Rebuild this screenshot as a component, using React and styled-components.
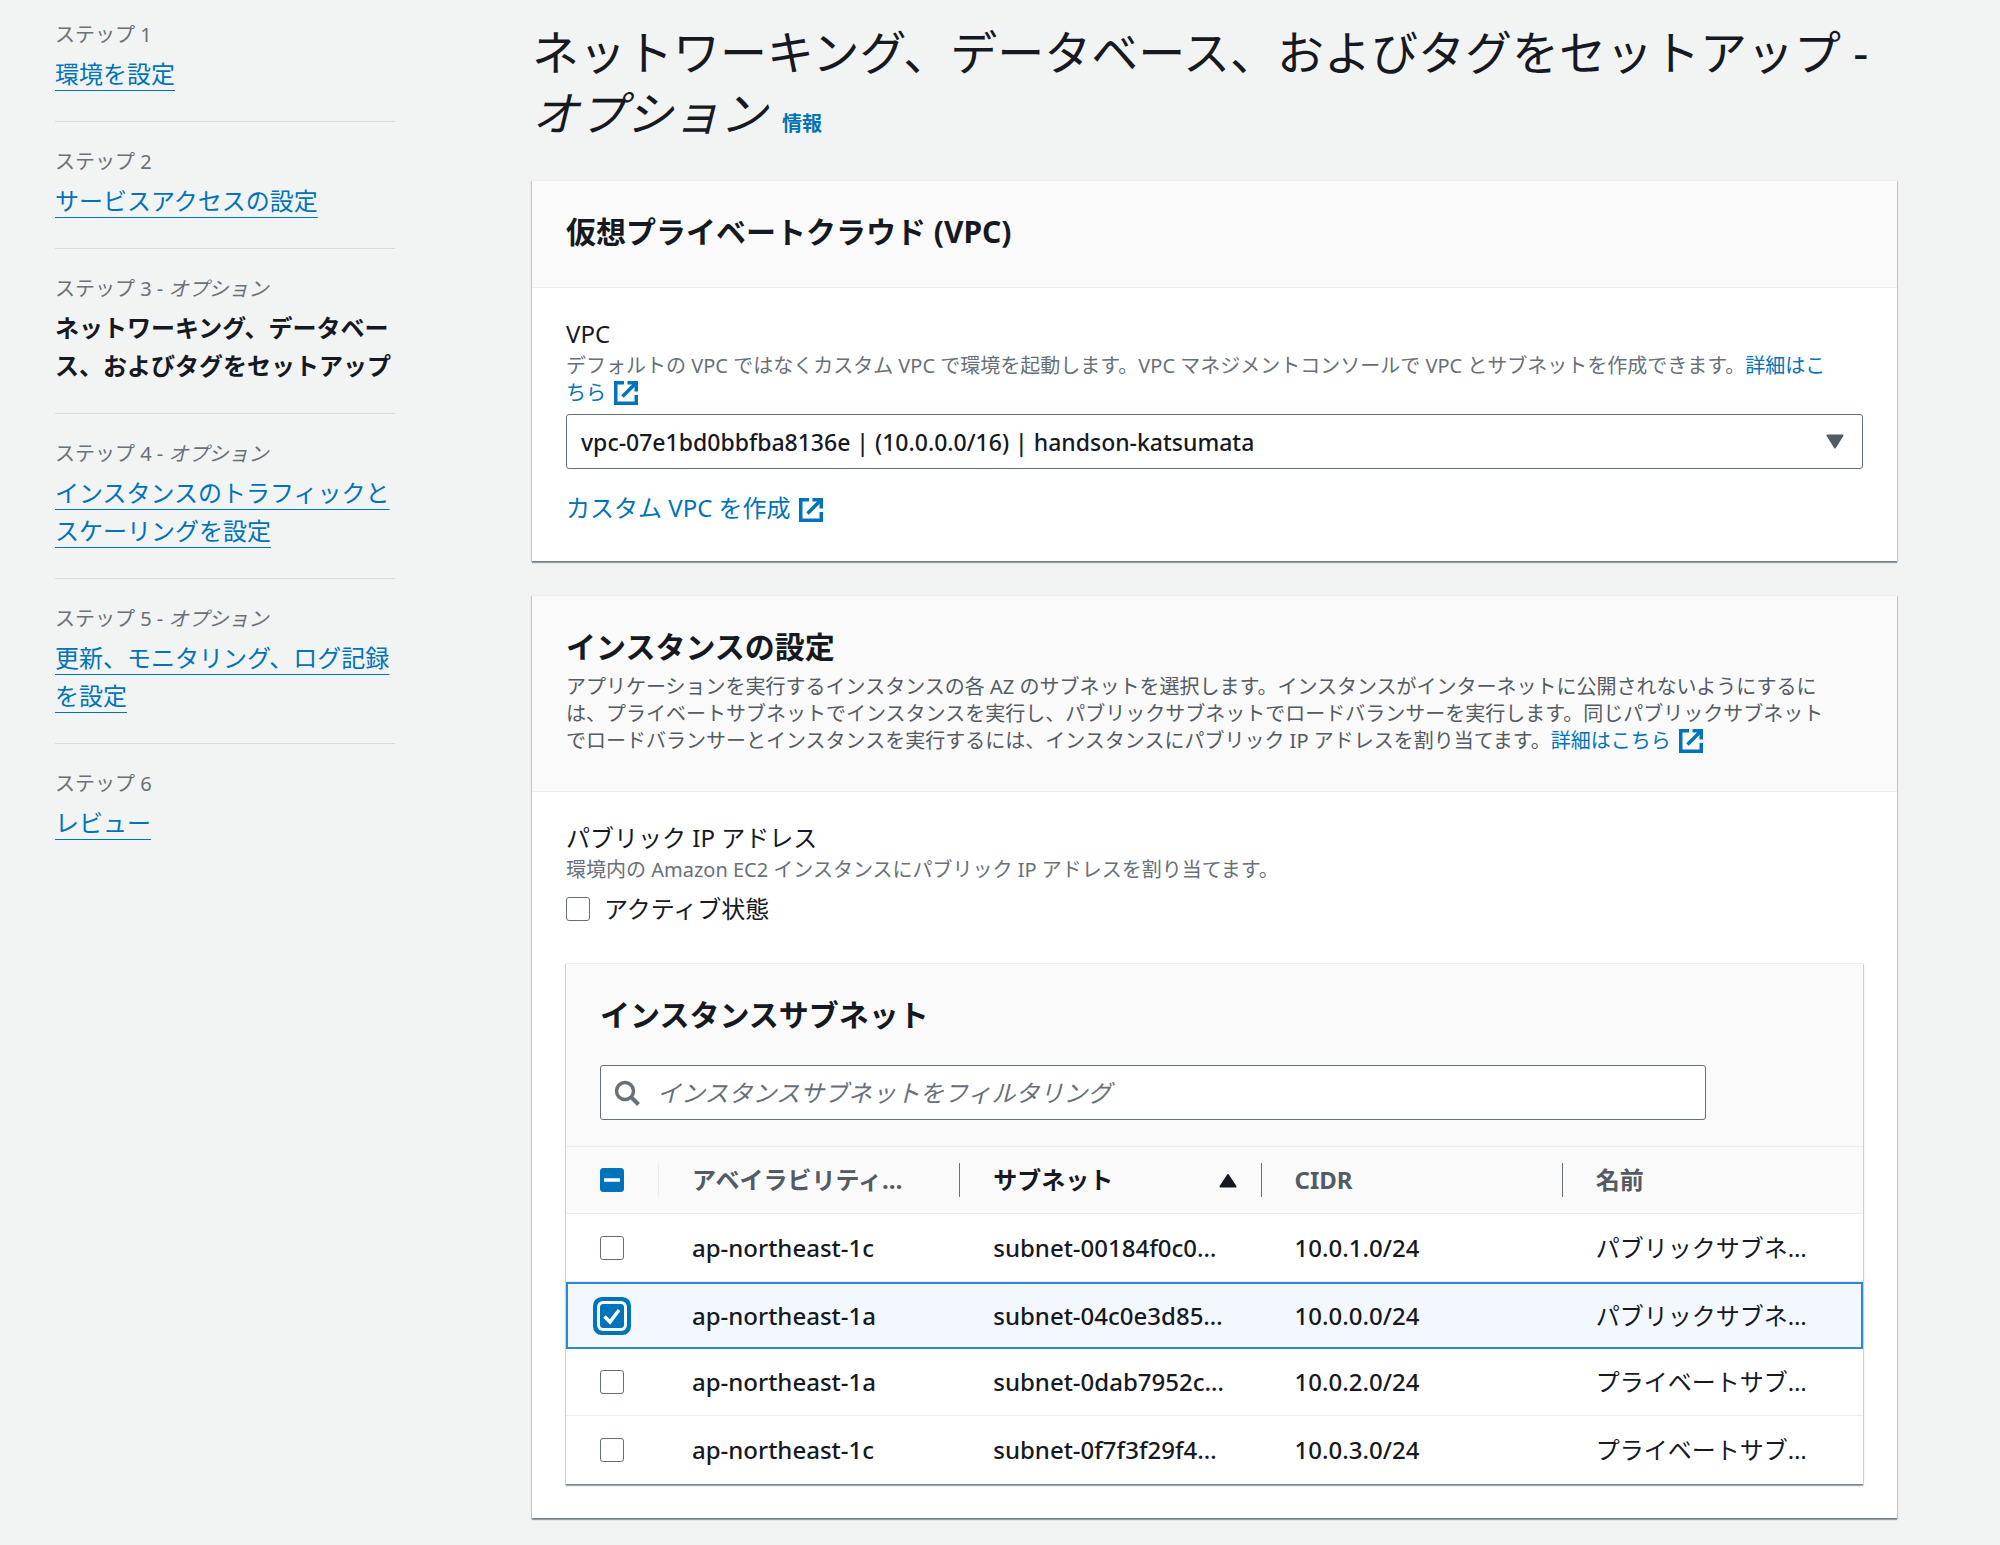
import React, { useEffect, useRef, useState } from 'react';
import styled, { createGlobalStyle } from 'styled-components';

const GlobalStyle = createGlobalStyle`
  *, *::before, *::after {
    box-sizing: border-box;
  }

  body {
    margin: 0;
    background: #f2f3f3;
    color: #16191f;
    font-family: "Noto Sans", "Noto Sans CJK JP", sans-serif;
    font-size: 24px;
    line-height: 32px;
  }

  button, input, select {
    font: inherit;
    color: inherit;
  }
`;

const Page = styled.div`
  display: flex;
  align-items: flex-start;
  gap: 137px;
  padding: 0 103px 27px 55px;
`;

const Steps = styled.nav`
  flex: 0 0 340px;
  padding-top: 19px;
`;

const StepList = styled.ol`
  list-style: none;
  margin: 0;
  padding: 0;
`;

const StepItem = styled.li`
  padding: 24px 0 28px;
  border-bottom: 1px solid #d5dbdb;

  &:first-child {
    padding-top: 0;
  }

  &:last-child {
    border-bottom: 0;
  }
`;

const StepLabel = styled.div`
  margin-bottom: 4px;
  color: #687078;
  font-size: 20px;
`;

const StepLink = styled.a`
  color: #0073bb;
  line-height: 38px;
  text-decoration: underline 1px;
  text-underline-offset: 7px;
  text-decoration-skip-ink: none;
`;

const StepCurrent = styled.strong`
  display: block;
  font-weight: 700;
  line-height: 38px;
`;

const Main = styled.main`
  flex: 1;
  min-width: 0;
  padding-top: 22px;
`;

const Title = styled.h1`
  margin: 0 0 36px;
  font-size: 47px;
  font-weight: 400;
  line-height: 61px;
`;

const InfoLink = styled.a`
  margin-left: 15px;
  color: #0073bb;
  font-size: 20px;
  font-weight: 700;
  line-height: 20px;
  text-decoration: none;
`;

const Card = styled.section`
  margin-bottom: ${props => (props.$nested ? '0' : '34px')};
  border-top: 1px solid #eaeded;
  background: #fff;
  box-shadow: 0 2px 1px 0 rgba(0, 28, 36, 0.35),
    1px 1px 1px 0 rgba(0, 28, 36, 0.15), -1px 1px 1px 0 rgba(0, 28, 36, 0.15);

  &:last-child {
    margin-bottom: 0;
  }
`;

const CardHeader = styled.header`
  padding: 33px 34px ${props => (props.$nested ? '26px' : '37px')};
  border-bottom: 1px solid #eaeded;
  background: #fafafa;
`;

const CardTitle = styled.h2`
  margin: 0;
  font-size: 30px;
  font-weight: 700;
  line-height: 36px;
`;

const CardBody = styled.div`
  padding: 30px 34px 34px;
`;

const Description = styled.p`
  margin: ${props => (props.$header ? '8px 0 0' : '2px 0 8px')};
  color: ${props => (props.$header ? '#545b64' : '#687078')};
  font-size: 20px;
  line-height: 27px;
`;

const FieldLabel = styled.label`
  display: block;
`;

const FieldSet = styled.fieldset`
  margin: 0 0 36px;
  padding: 0;
  border: 0;

  legend {
    padding: 0;
  }
`;

const TextLink = styled.a`
  color: #0073bb;
  text-decoration: none;

  svg {
    margin-left: 8px;
    vertical-align: -5px;
  }
`;

const ActionRow = styled.div`
  margin-top: 20px;
  line-height: 38px;
`;

/* the control and its icon share a single grid cell */
const Control = styled.div`
  display: grid;
  align-items: center;
  width: ${props => props.$width || '100%'};
  margin-top: ${props => props.$top || '0'};

  > * {
    grid-area: 1 / 1;
  }

  > svg {
    justify-self: ${props => props.$icon};
    margin: 0 ${props => (props.$icon === 'end' ? '19px' : '14px')};
    pointer-events: none;
    z-index: 1;
  }
`;

const Select = styled.select`
  appearance: none;
  width: 100%;
  height: 55px;
  padding: 0 48px 0 14px;
  border: 1px solid #687078;
  border-radius: 3px;
  background: #fff;
  font-size: 23px;
  font-weight: 500;
`;

const SearchInput = styled.input`
  width: 100%;
  height: 55px;
  padding: 0 14px 0 56px;
  border: 1px solid #687078;
  border-radius: 3px;
  background: #fff;

  &::placeholder {
    color: #687078;
    font-style: italic;
    opacity: 1;
  }
`;

const CheckRow = styled.label`
  display: flex;
  align-items: center;
  gap: 14px;
  line-height: 36px;
`;

const CheckBox = styled.span`
  display: grid;
  width: 24px;
  height: 24px;

  > * {
    grid-area: 1 / 1;
  }

  > svg {
    pointer-events: none;
  }
`;

const CheckInput = styled.input`
  appearance: none;
  width: 24px;
  height: 24px;
  margin: 0;
  border: 1px solid ${props => (props.$filled ? '#0073bb' : '#687078')};
  border-radius: 3px;
  background: ${props => (props.$filled ? '#0073bb' : '#fff')};
  box-shadow: ${props =>
    props.$ring ? '0 0 0 3px #f2f8fd, 0 0 0 7px #0073bb' : 'none'};
  outline: none;
`;

const Table = styled.table`
  width: 100%;
  table-layout: fixed;
  border-collapse: separate;
  border-spacing: 0;
`;

const HeadCell = styled.th`
  width: ${props => props.$width || 'auto'};
  height: 67px;
  padding: ${props => (props.$width ? '0 0 0 34px' : '0')};
  border-bottom: 1px solid #eaeded;
  background: #fafafa;
  text-align: left;
`;

const HeadButton = styled.button`
  display: flex;
  align-items: center;
  justify-content: space-between;
  width: 100%;
  height: 34px;
  padding: 0 24px 0 33px;
  border: 0;
  border-left: 1px solid ${props => (props.$first ? '#eaeded' : '#687078')};
  background: none;
  color: ${props => (props.$sorted ? '#16191f' : '#545b64')};
  font-weight: 700;
  white-space: nowrap;
`;

const Cell = styled.td`
  height: 67px;
  padding: 0 0 0 34px;
  border: 0 solid #2a8ad0;
  border-bottom: 1px solid #eaeded;
  overflow: hidden;
  white-space: nowrap;
  font-weight: 500;

  &:last-child {
    font-weight: 400;
  }
`;

const Row = styled.tr`
  &:first-child td,
  &:last-child td {
    height: 68px;
  }

  &:last-child td {
    border-bottom-color: transparent;
  }

  &[aria-selected='true'] td {
    border-top: 2px solid #2a8ad0;
    border-bottom: 2px solid #2a8ad0;
    background: #f2f8fd;
  }

  &[aria-selected='true'] td:first-child {
    padding-left: 32px;
    border-left: 2px solid #2a8ad0;
    overflow: visible;
  }

  &[aria-selected='true'] td:last-child {
    border-right: 2px solid #2a8ad0;
  }
`;

const ExternalIcon = () => (
  <svg
    width="24"
    height="24"
    viewBox="0 0 24 24"
    fill="none"
    stroke="#0073bb"
    strokeWidth="3.5"
    aria-hidden="true"
  >
    <path d="M10 1.75H1.75V22.25H22.25V14" />
    <path d="M13.5 1.75H22.25V10.5" />
    <path d="M22 2L8.5 15.5" />
    <path d="M16 1H23V8Z" fill="#0073bb" stroke="none" />
  </svg>
);

const SearchIcon = () => (
  <svg
    width="26"
    height="26"
    viewBox="0 0 26 26"
    fill="none"
    stroke="#687078"
    strokeWidth="3.5"
    aria-hidden="true"
  >
    <circle cx="11" cy="11" r="8.5" />
    <path d="M17 17L24.5 24.5" strokeWidth="4" />
  </svg>
);

const CaretDown = () => (
  <svg width="18" height="15" viewBox="0 0 18 15" aria-hidden="true">
    <path
      d="M1.5 1.5H16.5L9 13.5Z"
      fill="#545b64"
      stroke="#545b64"
      strokeWidth="2"
      strokeLinejoin="round"
    />
  </svg>
);

const CaretUp = () => (
  <svg width="18" height="15" viewBox="0 0 18 15" aria-hidden="true">
    <path
      d="M1.5 13.5H16.5L9 2Z"
      fill="#16191f"
      stroke="#16191f"
      strokeWidth="2"
      strokeLinejoin="round"
    />
  </svg>
);

const Mark = ({ partial }) => (
  <svg
    width="24"
    height="24"
    viewBox="0 0 24 24"
    fill="none"
    stroke="#fff"
    strokeWidth="3.5"
    aria-hidden="true"
  >
    <path d={partial ? 'M4 12H20' : 'M4.5 12.5L10 18L19 6'} />
  </svg>
);

const Checkbox = ({ checked, partial, ring, ...rest }) => {
  const ref = useRef(null);

  useEffect(() => {
    ref.current.indeterminate = Boolean(partial);
  }, [partial]);

  return (
    <CheckBox>
      <CheckInput
        ref={ref}
        type="checkbox"
        checked={checked}
        $filled={checked || partial}
        $ring={ring}
        {...rest}
      />
      {(checked || partial) && <Mark partial={partial} />}
    </CheckBox>
  );
};

const steps = [
  { title: '環境を設定' },
  { title: 'サービスアクセスの設定' },
  {
    title: 'ネットワーキング、データベース、およびタグをセットアップ',
    optional: true,
    current: true,
  },
  { title: 'インスタンスのトラフィックとスケーリングを設定', optional: true },
  { title: '更新、モニタリング、ログ記録を設定', optional: true },
  { title: 'レビュー' },
];

const columns = ['アベイラビリティ…', 'サブネット', 'CIDR', '名前'];

const subnets = [
  ['ap-northeast-1c', 'subnet-00184f0c0…', '10.0.1.0/24', 'パブリックサブネ…'],
  ['ap-northeast-1a', 'subnet-04c0e3d85…', '10.0.0.0/24', 'パブリックサブネ…'],
  ['ap-northeast-1a', 'subnet-0dab7952c…', '10.0.2.0/24', 'プライベートサブ…'],
  ['ap-northeast-1c', 'subnet-0f7f3f29f4…', '10.0.3.0/24', 'プライベートサブ…'],
];

export default function App () {
  const [publicIp, setPublicIp] = useState(false);
  const [selected, setSelected] = useState([1]);
  const [focused, setFocused] = useState(1);

  const toggle = index => {
    setFocused(index);
    setSelected(
      selected.includes(index)
        ? selected.filter(item => item !== index)
        : [...selected, index]
    );
  };

  const all = selected.length === subnets.length;

  return (
    <Page>
      <GlobalStyle />
      <Steps aria-label="ステップ">
        <StepList>
          {steps.map((step, index) => (
            <StepItem key={step.title}>
              <StepLabel>
                ステップ {index + 1}
                {step.optional && (
                  <>
                    {' - '}
                    <i>オプション</i>
                  </>
                )}
              </StepLabel>
              {step.current ? (
                <StepCurrent>{step.title}</StepCurrent>
              ) : (
                <StepLink href="#">{step.title}</StepLink>
              )}
            </StepItem>
          ))}
        </StepList>
      </Steps>

      <Main>
        <Title>
          ネットワーキング、データベース、およびタグをセットアップ -{' '}
          <i>オプション</i>
          <InfoLink href="#">情報</InfoLink>
        </Title>

        <Card>
          <CardHeader>
            <CardTitle>仮想プライベートクラウド (VPC)</CardTitle>
          </CardHeader>
          <CardBody>
            <FieldLabel htmlFor="vpc">VPC</FieldLabel>
            <Description>
              デフォルトの VPC ではなくカスタム VPC で環境を起動します。VPC
              マネジメントコンソールで VPC とサブネットを作成できます。
              <TextLink href="#">
                詳細はこ
                <br />
                ちら
                <ExternalIcon />
              </TextLink>
            </Description>
            <Control $icon="end">
              <Select id="vpc">
                <option>
                  vpc-07e1bd0bbfba8136e | (10.0.0.0/16) | handson-katsumata
                </option>
              </Select>
              <CaretDown />
            </Control>
            <ActionRow>
              <TextLink href="#">
                カスタム VPC を作成
                <ExternalIcon />
              </TextLink>
            </ActionRow>
          </CardBody>
        </Card>

        <Card>
          <CardHeader>
            <CardTitle>インスタンスの設定</CardTitle>
            <Description $header>
              アプリケーションを実行するインスタンスの各 AZ
              のサブネットを選択します。インスタンスがインターネットに公開されないようにするに
              <br />
              は、プライベートサブネットでインスタンスを実行し、パブリックサブネットでロードバランサーを実行します。同じパブリックサブネット
              <br />
              でロードバランサーとインスタンスを実行するには、インスタンスにパブリック IP
              アドレスを割り当てます。
              <TextLink href="#">
                詳細はこちら
                <ExternalIcon />
              </TextLink>
            </Description>
          </CardHeader>
          <CardBody>
            <FieldSet>
              <legend>パブリック IP アドレス</legend>
              <Description>
                環境内の Amazon EC2 インスタンスにパブリック IP
                アドレスを割り当てます。
              </Description>
              <CheckRow>
                <Checkbox
                  checked={publicIp}
                  onChange={() => setPublicIp(!publicIp)}
                />
                アクティブ状態
              </CheckRow>
            </FieldSet>

            <Card $nested>
              <CardHeader $nested>
                <CardTitle>インスタンスサブネット</CardTitle>
                <Control $icon="start" $width="90%" $top="32px">
                  <SearchInput
                    type="search"
                    aria-label="インスタンスサブネットをフィルタリング"
                    placeholder="インスタンスサブネットをフィルタリング"
                  />
                  <SearchIcon />
                </Control>
              </CardHeader>
              <Table>
                <thead>
                  <tr>
                    <HeadCell $width="92px">
                      <Checkbox
                        aria-label="すべて選択"
                        checked={all}
                        partial={selected.length > 0 && !all}
                        onChange={() =>
                          setSelected(all ? [] : subnets.map((_, i) => i))}
                      />
                    </HeadCell>
                    {columns.map((name, index) => (
                      <HeadCell
                        key={name}
                        aria-sort={index === 1 ? 'ascending' : undefined}
                      >
                        <HeadButton
                          type="button"
                          $first={index === 0}
                          $sorted={index === 1}
                        >
                          {name}
                          {index === 1 && <CaretUp />}
                        </HeadButton>
                      </HeadCell>
                    ))}
                  </tr>
                </thead>
                <tbody>
                  {subnets.map((subnet, index) => (
                    <Row key={subnet[1]} aria-selected={selected.includes(index)}>
                      <Cell>
                        <Checkbox
                          aria-label={subnet[1]}
                          checked={selected.includes(index)}
                          ring={focused === index}
                          onChange={() => toggle(index)}
                        />
                      </Cell>
                      {subnet.map(value => <Cell key={value}>{value}</Cell>)}
                    </Row>
                  ))}
                </tbody>
              </Table>
            </Card>
          </CardBody>
        </Card>
      </Main>
    </Page>
  );
}
